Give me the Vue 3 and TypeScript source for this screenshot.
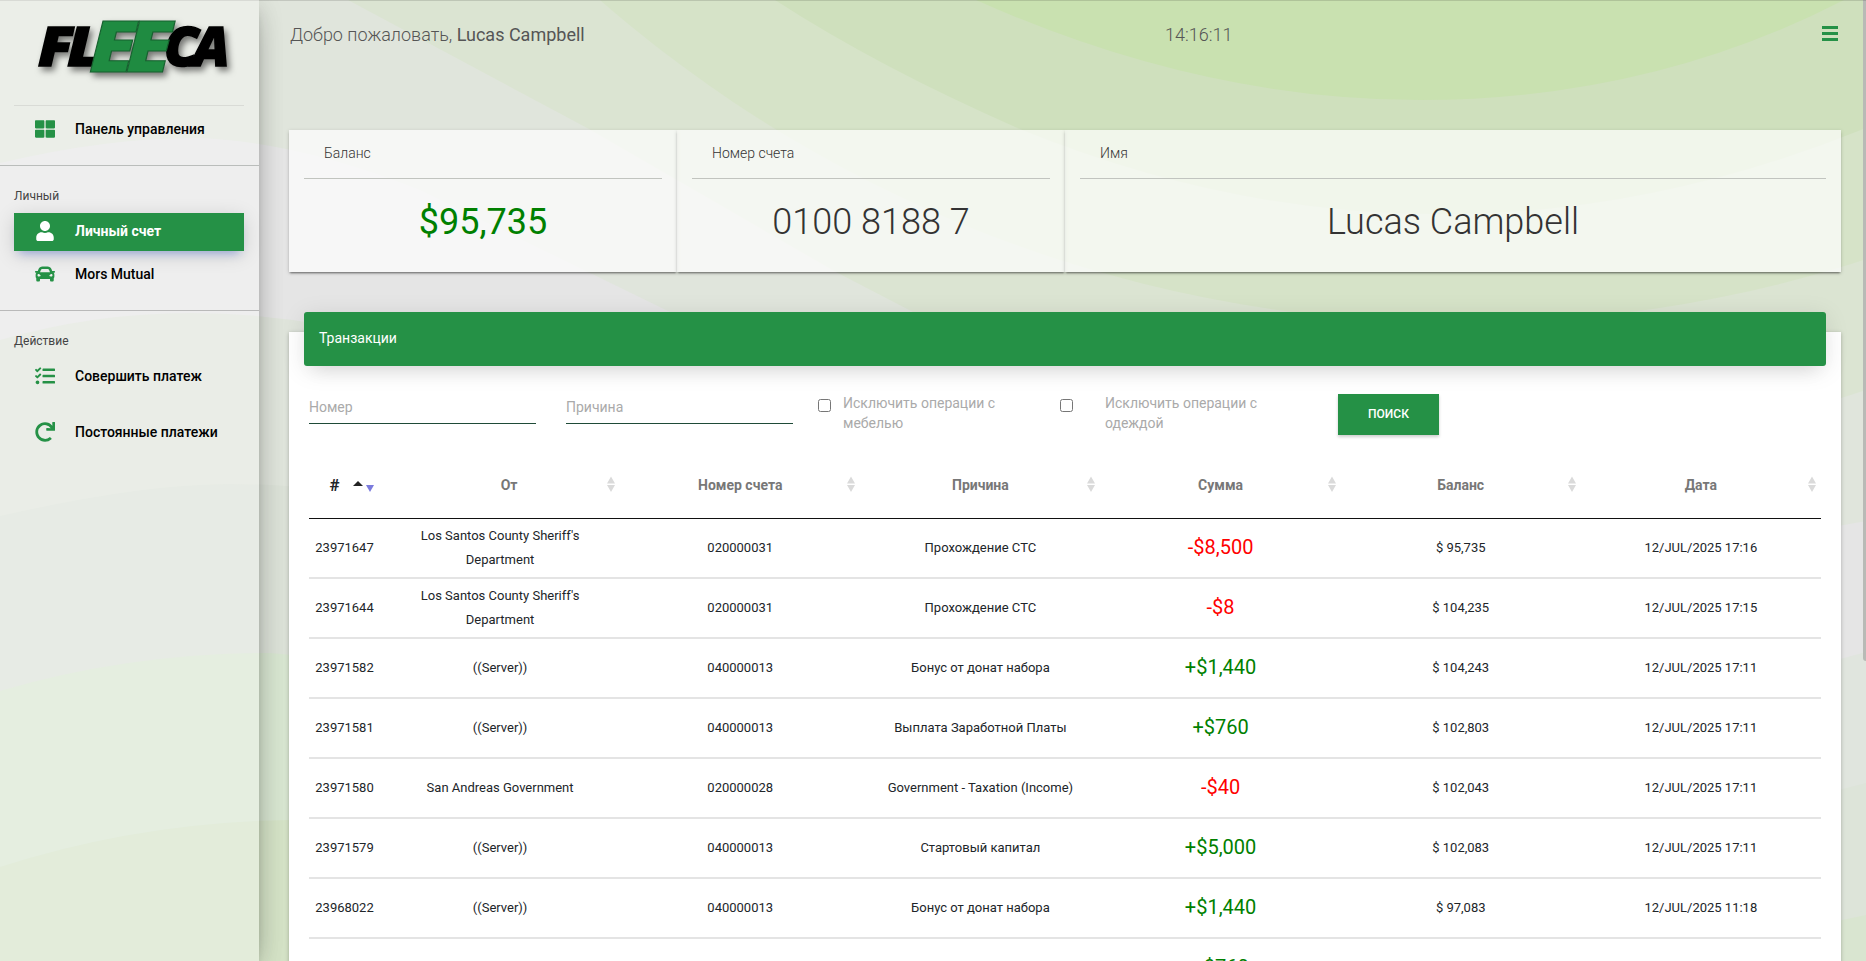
<script setup lang="ts">
interface Tx { id: string; from: string[]; acc: string; reason: string; sum: string; bal: string; date: string }
interface Nav { label: string; icon: string; box: string; cls?: string }

const columns = ['От', 'Номер счета', 'Причина', 'Сумма', 'Баланс', 'Дата']
const county = ["Los Santos County Sheriff's", 'Department']
const rows: Tx[] = [
  { id: '23971647', from: county, acc: '020000031', reason: 'Прохождение СТС', sum: '-$8,500', bal: '$ 95,735', date: '12/JUL/2025 17:16' },
  { id: '23971644', from: county, acc: '020000031', reason: 'Прохождение СТС', sum: '-$8', bal: '$ 104,235', date: '12/JUL/2025 17:15' },
  { id: '23971582', from: ['((Server))'], acc: '040000013', reason: 'Бонус от донат набора', sum: '+$1,440', bal: '$ 104,243', date: '12/JUL/2025 17:11' },
  { id: '23971581', from: ['((Server))'], acc: '040000013', reason: 'Выплата Заработной Платы', sum: '+$760', bal: '$ 102,803', date: '12/JUL/2025 17:11' },
  { id: '23971580', from: ['San Andreas Government'], acc: '020000028', reason: 'Government - Taxation (Income)', sum: '-$40', bal: '$ 102,043', date: '12/JUL/2025 17:11' },
  { id: '23971579', from: ['((Server))'], acc: '040000013', reason: 'Стартовый капитал', sum: '+$5,000', bal: '$ 102,083', date: '12/JUL/2025 17:11' },
  { id: '23968022', from: ['((Server))'], acc: '040000013', reason: 'Бонус от донат набора', sum: '+$1,440', bal: '$ 97,083', date: '12/JUL/2025 11:18' },
  { id: '23968021', from: ['((Server))'], acc: '040000013', reason: 'Выплата Заработной Платы', sum: '+$760', bal: '$ 95,643', date: '12/JUL/2025 11:18' },
]

const thLarge: Nav = { label: 'Панель управления', box: '0 0 512 512', icon: 'M296 32h192c13.255 0 24 10.745 24 24v160c0 13.255-10.745 24-24 24H296c-13.255 0-24-10.745-24-24V56c0-13.255 10.745-24 24-24zm-80 0H24C10.745 32 0 42.745 0 56v160c0 13.255 10.745 24 24 24h192c13.255 0 24-10.745 24-24V56c0-13.255-10.745-24-24-24zM0 296v160c0 13.255 10.745 24 24 24h192c13.255 0 24-10.745 24-24V296c0-13.255-10.745-24-24-24H24c-13.255 0-24 10.745-24 24zm296 184h192c13.255 0 24-10.745 24-24V296c0-13.255-10.745-24-24-24H296c-13.255 0-24 10.745-24 24v160c0 13.255 10.745 24 24 24z' }
const personal: Nav[] = [
  { label: 'Личный счет', cls: 'active', box: '0 0 448 512', icon: 'M224 256c70.700 0 128-57.300 128-128S294.700 0 224 0 96 57.300 96 128s57.300 128 128 128zm89.600 32h-16.700c-22.200 10.200-46.900 16-72.900 16s-50.600-5.800-72.900-16h-16.700C60.200 288 0 348.200 0 422.400V464c0 26.500 21.500 48 48 48h352c26.500 0 48-21.500 48-48v-41.600c0-74.200-60.200-134.400-134.400-134.400z' },
  { label: 'Mors Mutual', box: '0 0 512 512', icon: 'M499.990 176h-59.870l-16.640-41.600C406.380 91.630 365.570 64 319.500 64h-127c-46.060 0-86.880 27.630-103.990 70.400L71.870 176H12.010C4.200 176-1.530 183.340.370 190.910l6 24C7.700 220.250 12.500 224 18.010 224h20.070C24.650 235.730 16 252.780 16 272v48c0 16.120 6.160 30.670 16 41.930V416c0 17.670 14.330 32 32 32h32c17.670 0 32-14.330 32-32v-32h256v32c0 17.670 14.330 32 32 32h32c17.670 0 32-14.330 32-32v-54.070c9.840-11.250 16-25.800 16-41.930v-48c0-19.220-8.650-36.270-22.070-48H494c5.510 0 10.310-3.750 11.640-9.090l6-24c1.890-7.570-3.840-14.910-11.650-14.910zm-352.060-17.830c7.290-18.220 24.940-30.170 44.570-30.170h127c19.630 0 37.280 11.950 44.570 30.170L384 208H128l19.930-49.830zM96 319.800c-19.200 0-32-12.760-32-31.900S76.800 256 96 256s48 28.710 48 47.850-28.800 15.950-48 15.950zm320 0c-19.200 0-48 3.190-48-15.950S396.800 256 416 256s32 12.760 32 31.900-12.800 31.900-32 31.900z' },
]
const actions: Nav[] = [
  { label: 'Совершить платеж', box: '0 0 512 512', icon: 'M139.610 35.500a12 12 0 0 0-17 0L58.930 98.810l-22.700-22.120a12 12 0 0 0-17 0L3.530 92.410a12 12 0 0 0 0 17l47.590 47.400a12.780 12.780 0 0 0 17.610 0l15.590-15.620L156.520 69a12.090 12.090 0 0 0 .09-17zm0 159.190a12 12 0 0 0-17 0l-63.680 63.720-22.700-22.100a12 12 0 0 0-17 0L3.530 252a12 12 0 0 0 0 17L51 316.500a12.770 12.770 0 0 0 17.600 0l15.700-15.690 72.200-72.220a12 12 0 0 0 .09-16.900zM64 368c-26.490 0-48.590 21.500-48.590 48S37.530 464 64 464a48 48 0 0 0 0-96zm432 16H208a16 16 0 0 0-16 16v32a16 16 0 0 0 16 16h288a16 16 0 0 0 16-16v-32a16 16 0 0 0-16-16zm0-320H208a16 16 0 0 0-16 16v32a16 16 0 0 0 16 16h288a16 16 0 0 0 16-16V80a16 16 0 0 0-16-16zm0 160H208a16 16 0 0 0-16 16v32a16 16 0 0 0 16 16h288a16 16 0 0 0 16-16v-32a16 16 0 0 0-16-16z' },
  { label: 'Постоянные платежи', box: '0 0 512 512', icon: 'M500.330 0h-47.410a12 12 0 0 0-12 12.570l4 82.760A247.420 247.420 0 0 0 256 8C119.340 8 7.900 119.530 8 256.190 8.100 393.070 119.100 504 256 504a247.100 247.100 0 0 0 166.180-63.910 12 12 0 0 0 .48-17.430l-34-34a12 12 0 0 0-16.380-.550A176 176 0 1 1 402.100 157.800l-101.530-4.870a12 12 0 0 0-12.570 12v47.410a12 12 0 0 0 12 12h200.330a12 12 0 0 0 12-12V12a12 12 0 0 0-12-12z' },
]
const totals = [
  { title: 'Баланс', value: '$95,735', cls: 'money' },
  { title: 'Номер счета', value: '0100 8188 7', cls: '' },
  { title: 'Имя', value: 'Lucas Campbell', cls: 'wide' },
]
</script>

<template>
  <div class="page">
    <svg class="backdrop" viewBox="0 0 1866 961" aria-hidden="true">
      <rect width="1866" height="961" fill="#e5e5e5" />
      <path d="M0 163Q110 137 200 138Q300 142 420 190L670 312Q1250 640 1866 521V0H0z" fill="#e0e5dc" />
      <path d="M348 0L589 129L836 272L913 312Q1400 550 1866 390V0z" fill="#dbe4d2" />
      <circle cx="1462" cy="-989" r="1312" fill="#d6e3c8" />
      <path d="M775 0Q880 68 1020 129Q1440 300 1866 128V0z" fill="#cfe0bd" />
      <path d="M976 0Q1200 100 1420 100Q1650 100 1844 0z" fill="#c9e1b0" />
      <path d="M0 340Q190 285 400 342L700 961H0z" fill="#dfe4db" />
      <path d="M0 516Q140 484 230 484Q350 484 450 520V961H0z" fill="#dbe1d7" />
      <path d="M0 691Q130 653 270 653L450 670V961H0z" fill="#d7e5d0" />
      <path d="M0 867Q140 822 290 820L450 840V961H0z" fill="#d4e2c6" />
      <path d="M1800 670L1866 652V961H1800z" fill="#e0e5de" />
      <path d="M1800 800L1866 783V961H1800z" fill="#dde4d9" />
      <path d="M1800 929L1866 915V961H1800z" fill="#d9e5d0" />
    </svg>

    <aside class="sidebar">
      <div class="brand">
        <svg width="210" height="92" viewBox="0 0 210 92" role="img" aria-label="Fleeca">
          <g font-family="'Open Sans'" font-weight="800" font-style="italic">
            <g fill="#000" stroke="#000" stroke-width="1.500">
              <text transform="translate(6 65) scale(1.14 1)" font-size="54" letter-spacing="-5">FL</text>
              <text transform="translate(132 65) scale(1.02 1)" font-size="54" letter-spacing="-6">CA</text>
            </g>
            <text transform="translate(57 71) scale(1.2 1)" font-size="70" letter-spacing="-9" fill="#1f8b41" stroke="#17612f" stroke-width="1">EE</text>
          </g>
        </svg>
      </div>
      <nav class="group first">
        <a class="item"><svg class="ico" :viewBox="thLarge.box"><path :d="thLarge.icon" /></svg>{{ thLarge.label }}</a>
      </nav>
      <nav class="group second">
        <h6>Личный</h6>
        <a v-for="n in personal" :key="n.label" class="item" :class="n.cls"><svg class="ico" :viewBox="n.box"><path :d="n.icon" /></svg>{{ n.label }}</a>
      </nav>
      <nav class="group third">
        <h6>Действие</h6>
        <a v-for="n in actions" :key="n.label" class="item"><svg class="ico" :viewBox="n.box"><path :d="n.icon" /></svg>{{ n.label }}</a>
      </nav>
    </aside>

    <main class="main">
      <header class="top">
        <p class="hello">Добро пожаловать, <b>Lucas Campbell</b></p>
        <p class="clock">14:16:11</p>
        <button class="burger" aria-label="Menu"><i></i><i></i><i></i></button>
      </header>

      <section class="totals">
        <article v-for="t in totals" :key="t.title" class="total" :class="t.cls">
          <h5>{{ t.title }}</h5>
          <p>{{ t.value }}</p>
        </article>
      </section>

      <section class="sheet">
        <h4 class="banner">Транзакции</h4>
        <form class="filters">
          <input class="field" placeholder="Номер" />
          <input class="field reason" placeholder="Причина" />
          <input class="check one" type="checkbox" /><span class="hint">Исключить операции с мебелью</span>
          <input class="check two" type="checkbox" /><span class="hint far">Исключить операции с одеждой</span>
          <button class="search" type="button">ПОИСК</button>
        </form>
        <div class="table">
          <div class="row head">
            <div class="num"><span class="hash">#</span><span class="up"></span><span class="down"></span></div>
            <div v-for="c in columns" :key="c" class="th"><span>{{ c }}</span>
              <svg class="sort" viewBox="0 0 8 16"><path d="M4 0.500L8 7.500H0zM0 9H8L4 16z" /></svg>
            </div>
          </div>
          <div v-for="r in rows" :key="r.id" class="row">
            <div class="num">{{ r.id }}</div>
            <div><span v-for="l in r.from" :key="l" class="line">{{ l }}</span></div>
            <div>{{ r.acc }}</div>
            <div>{{ r.reason }}</div>
            <div class="sum" :class="{ minus: r.sum.startsWith('-') }">{{ r.sum }}</div>
            <div>{{ r.bal }}</div>
            <div>{{ r.date }}</div>
          </div>
        </div>
      </section>
    </main>
    <div class="scroll"></div>
  </div>
</template>

<style>
html, body { margin: 0; overflow: hidden; }
</style>

<style scoped>
* { box-sizing: border-box; }
p, h4, h5, h6 { margin: 0; font-weight: 400; }
.page { position: relative; display: flex; width: 1866px; height: 961px; overflow: hidden; font-family: Roboto, sans-serif; color: #212529; }
.page::after { content: ''; position: absolute; inset: 0 0 auto; height: 1px; background: rgba(0, 0, 0, .13); }
.backdrop { position: absolute; inset: 0; width: 1866px; height: 961px; }
.sidebar { position: relative; z-index: 2; flex: 0 0 259px; background: rgba(255, 255, 255, .35); box-shadow: 0 10px 30px -12px rgba(0, 0, 0, .42), 0 4px 25px rgba(0, 0, 0, .12), 0 8px 10px -5px rgba(0, 0, 0, .2); clip-path: inset(0 -50px 0 0); }
.brand { height: 106px; margin: 0 15px 0 14px; padding: 1px 0 0 18px; border-bottom: 1px solid #d9dbd6; }
.brand svg { display: block; overflow: visible; filter: drop-shadow(3px 4px 3px rgba(0, 0, 0, .5)); }
.group { padding: 0 15px 0 14px; }
.group.first { height: 60px; padding-top: 5px; border-bottom: 1px solid #babdbb; }
.group.second { height: 145px; padding-top: 23px; border-bottom: 1px solid #b9b9b9; }
.group.third { padding-top: 23px; }
h6 { height: 24px; font-size: 12px; line-height: 14px; color: #444; }
.item { display: flex; align-items: center; height: 38px; padding: 0 0 2px 21px; font-size: 14px; font-weight: 500; color: #000; margin-bottom: 5px; }
.third .item { margin-bottom: 18px; }
.item.active { background: #259146; color: #fff; font-weight: 700; box-shadow: 0 4px 20px rgba(0, 0, 0, .14), 0 7px 10px -5px rgba(60, 100, 230, .4); }
.ico { width: 20px; height: 20px; margin-right: 20px; fill: #259146; }
.active .ico { fill: #fff; }
.main { position: relative; flex: 1; padding: 0 25px 0 30px; }
.top { display: flex; height: 130px; padding-top: 23px; font-size: 18px; line-height: 24px; color: #555; }
.top p { font-weight: 300; }
.top b { font-weight: 400; }
.hello { width: 876px; padding-left: 1px; }
.burger { display: flex; flex-direction: column; gap: 3px; width: 16px; height: 22px; padding: 3px 0 0; margin: 0 3px 0 auto; border: 0; background: none; }
.burger i { height: 3px; background: #259146; }
.totals { display: grid; grid-template-columns: 388px 388px 1fr; height: 142px; }
.total { padding: 0 15px; background: rgba(255, 255, 255, .7); box-shadow: 0 2px 2px -1px rgba(0, 0, 0, .5), 0 1px 4px rgba(0, 0, 0, .16); }
.total h5 { height: 49px; padding: 15px 20px 0; border-bottom: 1px solid #c1c4bf; font-size: 14px; line-height: 17px; font-weight: 300; color: #333; }
.total p { padding-top: 21px; font-size: 36px; line-height: 44px; font-weight: 300; text-align: center; color: #333; }
.total.money p { color: #008000; font-weight: 400; }
.sheet { margin-top: 60px; padding: 0 15px; height: 700px; background: #fff; box-shadow: 0 1px 4px rgba(0, 0, 0, .25); }
.banner { position: relative; top: -20px; height: 54px; margin-bottom: -20px; padding: 0 15px; border-radius: 3px; background: #259146; color: #fff; font-size: 14px; line-height: 53px; box-shadow: 0 12px 20px -10px rgba(0, 0, 0, .1), 0 4px 24px rgba(0, 0, 0, .1); }
.filters { display: flex; align-items: flex-start; height: 58px; margin-top: 28px; padding-left: 5px; }
.field { width: 227px; height: 30px; margin-right: 30px; padding: 0 0 4px; border: 0; border-bottom: 1px solid #1f4b38; background: none; font: 14px Roboto; }
.field::placeholder { color: #aaa; }
.field.reason { margin-right: 25px; }
.check { width: 13px; height: 13px; margin: 5px 12px 0 0; }
.check.two { margin: 5px 32px 0 57px; }
.hint { width: 160px; margin-top: -1px; font-size: 14px; line-height: 20px; color: #aaa; }
.hint.far { margin-right: 73px; }
.search { width: 101px; height: 41px; border: 0; padding: 0 0 2px; background: #259146; color: #fff; font: 500 12px Roboto; box-shadow: 0 2px 3px rgba(0, 0, 0, .2); }
.table { margin: 0 5px; }
.row { display: grid; grid-template-columns: 71px repeat(6, 240.170px); align-items: center; height: 60px; border-bottom: 2px solid #e4e4e4; font-size: 13px; line-height: 24px; text-align: center; color: #212529; }
.row.head { height: 67px; border-bottom: 1px solid #111; font-size: 14px; }
.line { display: block; }
.sum { padding-bottom: 2px; font-size: 20px; color: #008000; }
.sum.minus { color: #f00; }
.th { position: relative; font-weight: 700; color: #777; }
.th:nth-child(2) { padding-left: 18px; }
.sort { position: absolute; right: 5px; top: 3px; width: 8px; height: 16px; fill: #dadada; }
.head .num { display: flex; align-items: center; padding-left: 19px; }
.hash { width: 13px; font-weight: 700; font-size: 17px; }
.up, .down { border: 5px solid transparent; border-bottom: 5px solid #222; border-top-width: 0; margin: -4px 3px 0 12px; }
.down { border: 4px solid transparent; border-top: 7px solid #7b7bdd; border-bottom-width: 0; margin: 7px 0 0; }
.scroll { position: absolute; right: 0; top: 0; width: 3px; height: 661px; border-radius: 0 0 0 3px; background: #b8bab6; }
</style>
